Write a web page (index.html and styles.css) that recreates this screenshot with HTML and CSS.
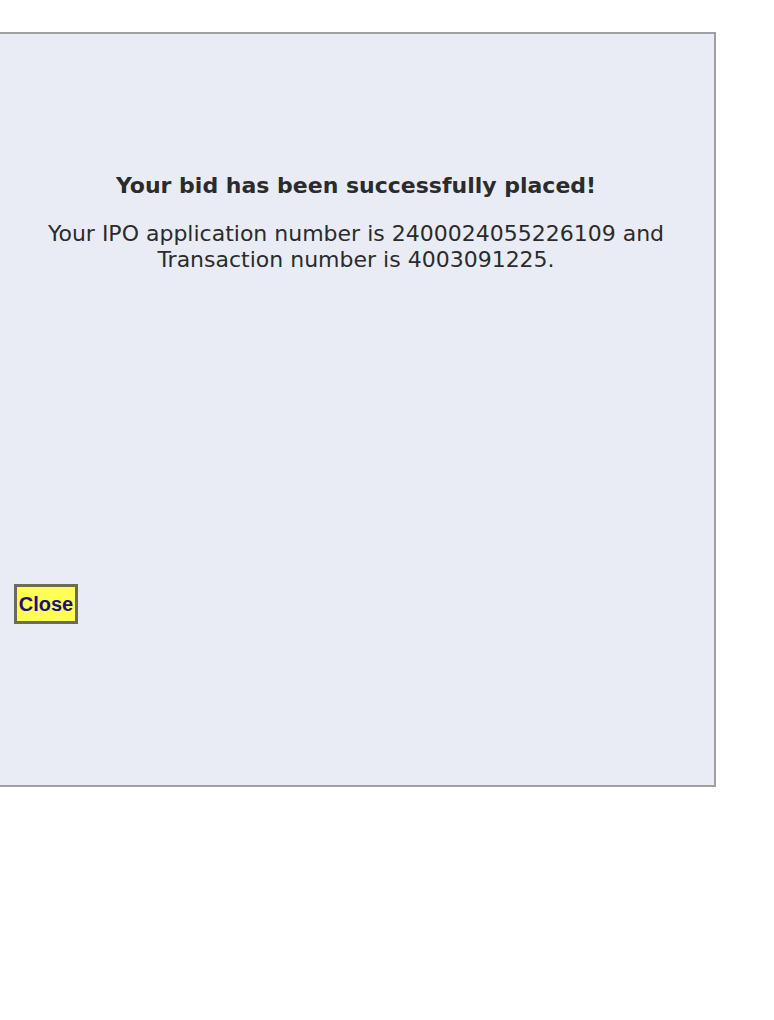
FILE: index.html
```html
<!DOCTYPE html>
<html>
<head>
<meta charset="utf-8">
<link rel="stylesheet" href="styles.css">
</head>
<body>
<div class="panel">
  <div class="message">
    <h2 class="title">Your bid has been successfully placed!</h2>
    <p class="detail">Your IPO application number is 2400024055226109 and<br>Transaction number is 4003091225.</p>
  </div>
  <div class="actions">
    <button class="close-btn">Close</button>
  </div>
</div>
</body>
</html>
```
FILE: styles.css
```css
html, body {
  margin: 0;
  padding: 0;
  background: #ffffff;
}
body {
  padding-top: 32px;
}
.panel {
  margin-left: -4px;
  background: #eaecf5;
  border: 2px solid #a0a0a0;
  box-sizing: border-box;
  width: 720px;
  height: 755px;
  display: flex;
  flex-direction: column;
  font-family: "DejaVu Sans", Verdana, sans-serif;
  color: #2b2b2b;
}
.message {
  padding-top: 139px;
  text-align: center;
}
.title {
  margin: 0;
  font-size: 22px;
  font-weight: bold;
  line-height: 26px;
}
.detail {
  margin: 22px 0 0;
  font-size: 22px;
  line-height: 26px;
}
.actions {
  padding: 0 0 0 16px;
  margin-top: 311px;
}
.close-btn {
  display: block;
  font-family: "Liberation Sans", Arial, sans-serif;
  font-weight: bold;
  font-size: 20px;
  color: #1c0f7a;
  background: #ffff55;
  border: 3px solid #6b6b5a;
  padding: 0;
  height: 40px;
  width: 64px;
  box-sizing: border-box;
  cursor: pointer;
}
```
